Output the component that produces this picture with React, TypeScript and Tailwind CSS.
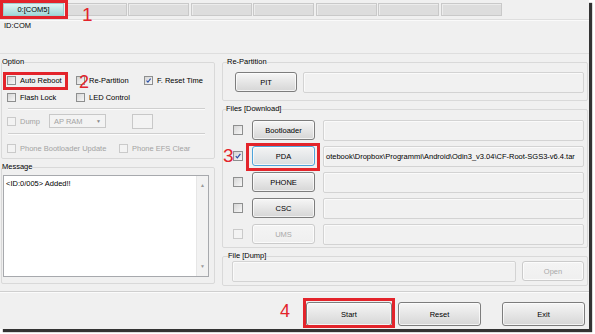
import clsx from 'clsx';

const RED = 'border-[#e3242b]';

function Box({ checked, disabled, className }: { checked?: boolean; disabled?: boolean; className?: string }) {
  return (
    <div
      className={clsx(
        'relative shrink-0 border',
        disabled ? 'border-[#cacaca] bg-[#f3f3f3]' : 'border-[#8e8f8f] bg-linear-to-br from-[#d6d6d6] to-[#f7f7f7]',
        className
      )}
    >
      {checked && (
        <svg viewBox="0 0 10 10" className="absolute inset-0 h-full w-full">
          <path d="M2.2 5.2 L4.2 7.4 L8 2.4" fill="none" stroke="#2a4fa8" strokeWidth="1.5" />
        </svg>
      )}
    </div>
  );
}

function Opt({ label, checked, disabled, className }: { label: string; checked?: boolean; disabled?: boolean; className?: string }) {
  return (
    <div className={clsx('flex items-center gap-[4px]', className)}>
      <Box checked={checked} disabled={disabled} className="h-[9px] w-[9px]" />
      <span className={disabled ? 'text-[#a3a3a3]' : 'text-black'}>{label}</span>
    </div>
  );
}

function Btn({ label, disabled, focus, className }: { label: string; disabled?: boolean; focus?: boolean; className?: string }) {
  return (
    <div
      className={clsx(
        'flex shrink-0 items-center justify-center rounded-[3px] border bg-linear-to-b shadow-[inset_0_0_0_1px_rgba(255,255,255,0.7)]',
        disabled
          ? 'border-[#cbcbcb] from-[#f4f4f4] to-[#efefef] text-[#a9a9a9]'
          : focus
            ? 'border-[#4ea3da] from-[#f4f4f4] to-[#d9dde0] text-black'
            : 'border-[#7d7d7d] from-[#f6f6f6] to-[#d6d6d6] text-black',
        className
      )}
    >
      {label}
    </div>
  );
}

function Field({ className, children }: { className?: string; children?: React.ReactNode }) {
  return (
    <div className={clsx('flex items-center rounded-[2px] border border-[#d3d3d3] bg-[#f1f1f1] shadow-[inset_1px_1px_0_#fafafa]', className)}>
      {children}
    </div>
  );
}

const fileRows = [
  { label: 'Bootloader' },
  { label: 'PDA', checked: true, focus: true, path: 'otebook\\Dropbox\\Programmi\\Android\\Odin3_v3.04\\CF-Root-SGS3-v6.4.tar' },
  { label: 'PHONE' },
  { label: 'CSC' },
  { label: 'UMS', disabled: true },
];

export default function App() {
  return (
    <div className="h-[334px] w-[595px] overflow-hidden bg-white font-['Liberation_Sans',Arial,sans-serif] text-[7.5px] leading-[9px] text-black">
      <div className="relative flex h-[329px] w-[589px] flex-col bg-[#f0f0f0] shadow-[3px_3px_1px_rgba(0,0,0,0.8)]">
        {/* port tabs */}
        <div className="flex h-[16px] gap-[1.5px] pl-[3px] pt-[3px]">
          <div className="flex h-[13px] w-[61px] items-center justify-center border border-[#9fcfcf] bg-linear-to-b from-[#e0f5f5] to-[#a2d8d8] text-black">
            0:[COM5]
          </div>
          {Array.from({ length: 7 }).map((_, i) => (
            <div key={i} className="h-[13px] w-[61px] border border-[#c9c9c9] bg-[#dddddd] shadow-[inset_1px_1px_0_#ececec]" />
          ))}
        </div>

        {/* id */}
        <div className="mt-[3px] h-[35px] border-y border-[#dedede] pl-[4px] pt-[1px] shadow-[inset_0_1px_0_#fafafa]">
          ID:COM
        </div>

        <div className="mt-[3px] flex">
          {/* left column */}
          <div className="ml-[1px] flex w-[214px] flex-col">
            <fieldset className="rounded-[2px] border border-[#d9d9d9] pb-[4px]">
              <legend className="leading-[10px]">Option</legend>
              <div className="ml-[5px] mt-[7px] flex h-[12px] items-center">
                <Opt label="Auto Reboot" className="w-[69px]" />
                <Opt label="Re-Partition" className="w-[68px]" />
                <Opt label="F. Reset Time" checked />
              </div>
              <div className="ml-[5px] mt-[5px] flex h-[12px] items-center">
                <Opt label="Flash Lock" className="w-[69px]" />
                <Opt label="LED Control" />
              </div>
              <div className="ml-[6px] mr-[9px] mt-[5px] border-t border-[#cfcfcf] shadow-[0_1px_0_#fbfbfb]" />
              <div className="ml-[5px] mt-[5px] flex h-[14px] items-center">
                <Opt label="Dump" disabled className="w-[42px]" />
                <div className="flex h-[14px] w-[57px] items-center justify-between border border-[#c8c8c8] bg-[#f3f3f3] pl-[4px] pr-[4px] text-[#a3a3a3]">
                  <span>AP RAM</span>
                  <span className="text-[5px] text-[#8a8a8a]">▼</span>
                </div>
                <div className="ml-[26px] h-[15px] w-[21px] border border-[#c8c8c8] bg-[#f3f3f3]" />
              </div>
              <div className="ml-[6px] mr-[9px] mt-[5px] border-t border-[#cfcfcf] shadow-[0_1px_0_#fbfbfb]" />
              <div className="ml-[5px] mt-[8px] flex h-[12px] items-center">
                <Opt label="Phone Bootloader Update" disabled className="w-[112px]" />
                <Opt label="Phone EFS Clear" disabled />
              </div>
            </fieldset>

            <fieldset className="mt-[3px] rounded-[2px] border border-[#d9d9d9] pb-[6px]">
              <legend className="leading-[10px]">Message</legend>
              <div className="ml-[1px] mt-[3px] flex h-[102px] w-[206px] border border-[#a7a9ad] bg-white">
                <div className="flex-1 pl-[2px] pt-[3px]">&lt;ID:0/005&gt; Added!!</div>
                <div className="flex w-[12px] flex-col items-center justify-between border-l border-[#e6e6e6] bg-[#f2f2f2] py-[5px] text-[5px] text-[#9a9a9a]">
                  <span>▲</span>
                  <span>▼</span>
                </div>
              </div>
            </fieldset>
          </div>

          {/* right column */}
          <div className="ml-[7px] flex w-[366px] flex-col">
            <fieldset className="rounded-[2px] border border-[#d9d9d9] pb-[7px]">
              <legend className="ml-[4px] leading-[10px]">Re-Partition</legend>
              <div className="ml-[12px] mt-[5px] flex gap-[6px]">
                <Btn label="PIT" className="h-[20px] w-[62px]" />
                <Field className="h-[21px] w-[281px]" />
              </div>
            </fieldset>

            <fieldset className="mt-[3px] rounded-[2px] border border-[#d9d9d9] pb-[3px]">
              <legend className="ml-[3px] leading-[10px]">Files [Download]</legend>
              <div className="mt-[6px] flex flex-col gap-[6px]">
                {fileRows.map((r) => (
                  <div key={r.label} className="ml-[10px] flex h-[20px] items-center">
                    <Box checked={r.checked} disabled={r.disabled} className="h-[10px] w-[10px]" />
                    <Btn label={r.label} disabled={r.disabled} focus={r.focus} className="ml-[9px] h-[20px] w-[63px]" />
                    <Field className="ml-[8px] h-[21px] w-[261px] pl-[2px]">
                      {r.path && <span className="whitespace-nowrap">{r.path}</span>}
                    </Field>
                  </div>
                ))}
              </div>
            </fieldset>

            <fieldset className="mt-[3px] rounded-[2px] border border-[#d9d9d9] pb-[3px]">
              <legend className="ml-[5px] leading-[10px]">File [Dump]</legend>
              <div className="ml-[9px] flex gap-[6px]">
                <Field className="h-[21px] w-[284px]" />
                <Btn label="Open" disabled className="h-[20px] w-[62px]" />
              </div>
            </fieldset>
          </div>
        </div>

        {/* bottom bar */}
        <div className="mt-[5px] flex border-t border-[#cfcfcf] pt-[10px] shadow-[inset_0_1px_0_#fbfbfb]">
          <Btn label="Start" className="ml-[306px] h-[24px] w-[86px]" />
          <Btn label="Reset" className="ml-[6px] h-[24px] w-[83px]" />
          <Btn label="Exit" className="ml-[21px] h-[24px] w-[83px]" />
        </div>

        {/* annotations */}
        <div className={clsx('absolute left-0 top-0 h-[19px] w-[68px] border-[3px]', RED)} />
        <div className={clsx('absolute left-[3px] top-[72px] h-[18px] w-[65px] border-[3px]', RED)} />
        <div className={clsx('absolute left-[246px] top-[143px] h-[28px] w-[74px] border-[3px]', RED)} />
        <div className={clsx('absolute left-[303px] top-[298px] h-[30px] w-[92px] border-[3px]', RED)} />
        <span className="absolute left-[82px] top-[5px] text-[19px] leading-[19px] text-[#e3242b]">1</span>
        <span className="absolute left-[79px] top-[73px] text-[18px] leading-[18px] text-[#e3242b]">2</span>
        <span className="absolute left-[223px] top-[146px] text-[19px] leading-[19px] text-[#e3242b]">3</span>
        <span className="absolute left-[280px] top-[302px] text-[18px] leading-[18px] text-[#e3242b]">4</span>
      </div>
    </div>
  );
}
